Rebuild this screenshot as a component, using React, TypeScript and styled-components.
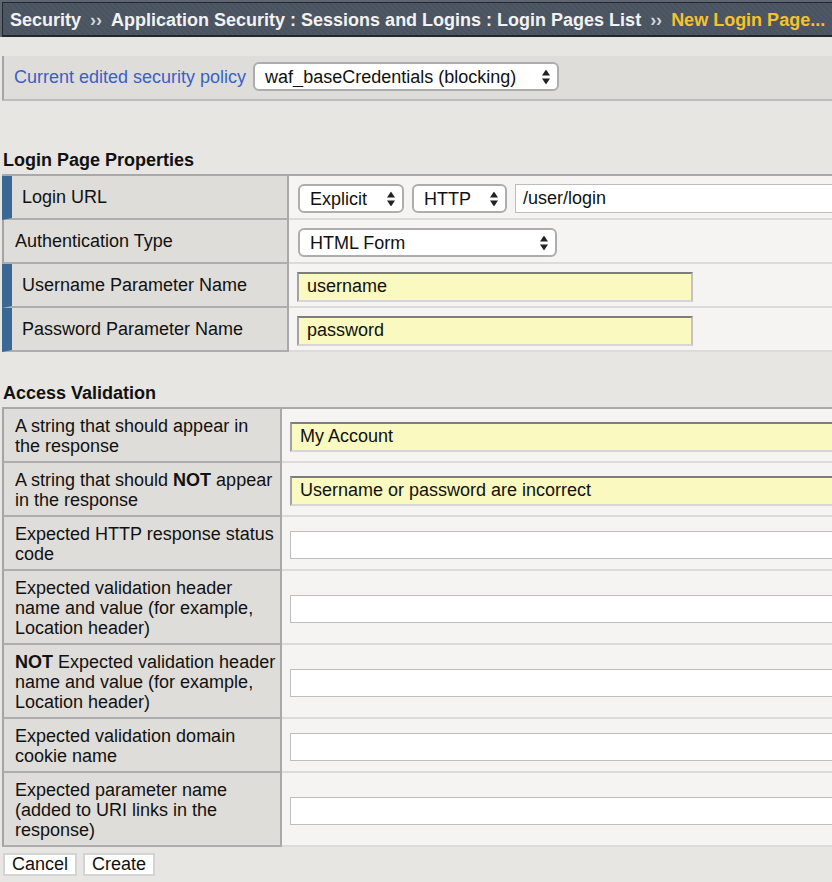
import React from 'react';
import styled, { createGlobalStyle } from 'styled-components';

const FONT = `"Liberation Sans", Arial, Helvetica, sans-serif`;

const GlobalStyle = createGlobalStyle`
  html, body { margin: 0; padding: 0; background: #e8e6e2; overflow: hidden; }
  body { font-family: ${FONT}; font-size: 18px; color: #111; }
  * { box-sizing: border-box; }
`;

const Page = styled.div`
  width: 100%;
  min-height: 882px;
  background: #e8e6e2;
  overflow: hidden;
`;

const HeaderWrap = styled.div`
  background: #5d6772;
  padding: 2px 0 0 2px;
`;

const Breadcrumb = styled.div`
  height: 35px;
  border-top: 1px solid #24282c;
  border-left: 1px solid #24282c;
  border-bottom: 2px solid #24282c;
  background: repeating-linear-gradient(45deg, #4a5461 0 2px, #4e5865 2px 4px);
  padding: 2px 0 0 7px;
  line-height: 30px;
  font-weight: bold;
  font-size: 18px;
  white-space: nowrap;
  overflow: hidden;
`;

const Crumb = styled.span<{ $current?: boolean }>`
  color: ${(p) => (p.$current ? '#f6c22c' : '#f2f2f2')};
`;

const Sep = styled.span`
  margin: 0 9px;
  color: #d4d4d4;
`;

const PolicyBar = styled.div`
  margin: 19px 0 0 2px;
  display: flex;
  align-items: center;
  padding: 6px 0 8px 10px;
  background: #dfddd9;
  border-left: 2px solid #a4a4a4;
  border-bottom: 2px solid #bdbdbd;
`;

const PolicyLabel = styled.span`
  color: #3a60c6;
  margin-right: 7px;
  line-height: 20px;
`;

const SelectWrap = styled.div<{ $w: number }>`
  position: relative;
  width: ${(p) => p.$w}px;
  height: 29px;
  flex: none;
`;

const SelectEl = styled.select`
  appearance: none;
  -webkit-appearance: none;
  width: 100%;
  height: 100%;
  margin: 0;
  border: 2px solid #adadad;
  border-radius: 6px;
  background: #fff;
  font: 18px ${FONT};
  color: #111;
  padding: 0 22px 0 10px;
  outline: none;
`;

const Arrow = styled.svg`
  position: absolute;
  right: 9px;
  top: 50%;
  transform: translateY(-50%);
  pointer-events: none;
`;

const SectionTitle = styled.h2<{ $top: number }>`
  margin: ${(p) => p.$top}px 0 4px 3px;
  font-size: 18px;
  line-height: 20px;
  font-weight: bold;
  color: #111;
`;

const Grid = styled.div<{ $label: number }>`
  margin-left: 2px;
  display: grid;
  grid-template-columns: ${(p) => p.$label}px minmax(0, 1fr);
  border-top: 2px solid #a9a9a9;
`;

const LabelCell = styled.div<{ $required?: boolean; $multi?: boolean }>`
  display: flex;
  align-items: center;
  min-height: 44px;
  background: #dfddd9;
  border-left: ${(p) => (p.$required ? '10px solid #3a6894' : '2px solid #a4a4a4')};
  border-right: 2px solid #a9a9a9;
  border-bottom: 2px solid #adadad;
  padding: ${(p) => (p.$multi ? '7px 4px 5px 11px' : `0 4px 0 ${p.$required ? 10 : 11}px`)};
  line-height: 20px;
  white-space: nowrap;
  color: #111;
`;

const ValueCell = styled.div<{ $pad: number }>`
  display: flex;
  align-items: center;
  gap: 8px;
  background: #f5f4f2;
  border-bottom: 2px solid #dddbd8;
  padding: 3px 0 0 ${(p) => p.$pad}px;
  min-width: 0;
  overflow: hidden;
`;

const YellowInput = styled.input<{ $w?: string }>`
  height: 30px;
  width: ${(p) => p.$w || 'calc(100% + 20px)'};
  flex: none;
  margin: 0;
  background: #f9f9c0;
  border: 2px solid;
  border-color: #7d7d7d #c2c2c2 #d6d6d6 #a2a2a2;
  padding: 0 8px;
  font: 18px ${FONT};
  color: #111;
  outline: none;
`;

const WhiteInput = styled.input<{ $h?: number; $w?: string }>`
  height: ${(p) => p.$h || 28}px;
  width: ${(p) => p.$w || 'calc(100% + 20px)'};
  flex: none;
  margin: 0;
  background: #fff;
  border: 1px solid #bdbdbd;
  padding: 0 7px;
  font: 18px ${FONT};
  color: #111;
  outline: none;
`;

const Footer = styled.div`
  display: flex;
  gap: 6px;
  margin: 6px 0 0 3px;
`;

const Button = styled.button`
  font: 18px/19px ${FONT};
  color: #111;
  background: #fff;
  border: 2px solid #d4d4d4;
  padding: 0 7px;
  height: 23px;
  margin: 0;
`;

function Select({ w, value }: { w: number; value: string }) {
  return (
    <SelectWrap $w={w}>
      <SelectEl defaultValue={value}>
        <option value={value}>{value}</option>
      </SelectEl>
      <Arrow width="8" height="15" viewBox="0 0 8 15">
        <polygon points="4,0 8,6 0,6" fill="#222" />
        <polygon points="0,9 8,9 4,15" fill="#222" />
      </Arrow>
    </SelectWrap>
  );
}

type AVRow = { label: React.ReactNode; value?: string };

const accessRows: AVRow[] = [
  { label: <>A string that should appear in<br />the response</>, value: 'My Account' },
  {
    label: <>A string that should <b>NOT</b> appear<br />in the response</>,
    value: 'Username or password are incorrect',
  },
  { label: <>Expected HTTP response status<br />code</> },
  { label: <>Expected validation header<br />name and value (for example,<br />Location header)</> },
  { label: <><b>NOT</b> Expected validation header<br />name and value (for example,<br />Location header)</> },
  { label: <>Expected validation domain<br />cookie name</> },
  { label: <>Expected parameter name<br />(added to URI links in the<br />response)</> },
];

export default function App() {
  return (
    <Page>
      <GlobalStyle />
      <HeaderWrap>
        <Breadcrumb>
          <Crumb>Security</Crumb>
          <Sep>››</Sep>
          <Crumb>Application Security : Sessions and Logins : Login Pages List</Crumb>
          <Sep>››</Sep>
          <Crumb $current>New Login Page...</Crumb>
        </Breadcrumb>
      </HeaderWrap>

      <PolicyBar>
        <PolicyLabel>Current edited security policy</PolicyLabel>
        <Select w={306} value="waf_baseCredentials (blocking)" />
      </PolicyBar>

      <SectionTitle $top={49}>Login Page Properties</SectionTitle>
      <Grid $label={287}>
        <LabelCell $required>Login URL</LabelCell>
        <ValueCell $pad={9}>
          <Select w={106} value="Explicit" />
          <Select w={95} value="HTTP" />
          <WhiteInput $h={29} $w="400px" defaultValue="/user/login" />
        </ValueCell>

        <LabelCell>Authentication Type</LabelCell>
        <ValueCell $pad={9}>
          <Select w={259} value="HTML Form" />
        </ValueCell>

        <LabelCell $required>Username Parameter Name</LabelCell>
        <ValueCell $pad={8}>
          <YellowInput $w="396px" defaultValue="username" />
        </ValueCell>

        <LabelCell $required>Password Parameter Name</LabelCell>
        <ValueCell $pad={8}>
          <YellowInput $w="396px" defaultValue="password" />
        </ValueCell>
      </Grid>

      <SectionTitle $top={31}>Access Validation</SectionTitle>
      <Grid $label={280}>
        {accessRows.map((r, i) => (
          <React.Fragment key={i}>
            <LabelCell $multi>
              <span>{r.label}</span>
            </LabelCell>
            <ValueCell $pad={8}>
              {r.value ? <YellowInput defaultValue={r.value} /> : <WhiteInput />}
            </ValueCell>
          </React.Fragment>
        ))}
      </Grid>

      <Footer>
        <Button>Cancel</Button>
        <Button>Create</Button>
      </Footer>
    </Page>
  );
}
